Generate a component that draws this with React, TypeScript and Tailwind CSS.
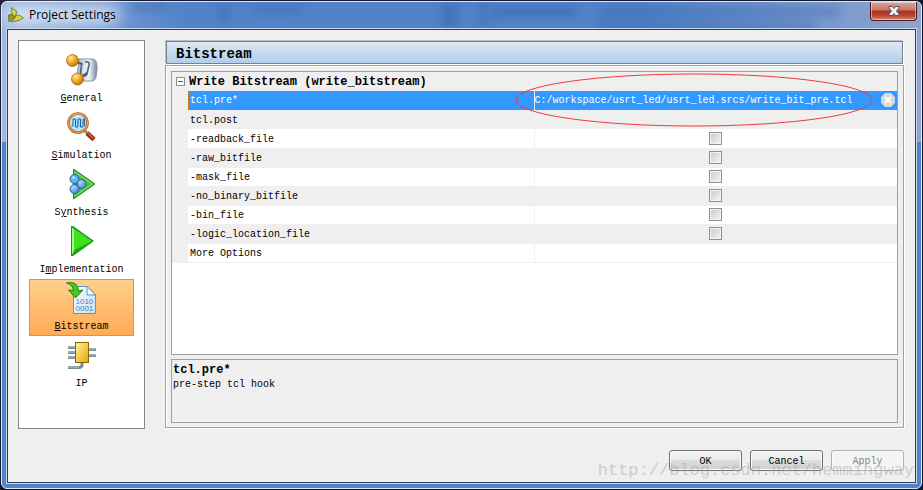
import { useState } from 'react';
import type { ReactNode } from 'react';

function LogoIcon() {
  return (
    <svg width="16" height="16" viewBox="0 0 16 16" aria-hidden="true">
      <path d="M3.500 0.500L9 4.500 7 10 4 7z" fill="#c3c92c" stroke="#6b741a" strokeWidth="0.8" />
      <path d="M0.500 8L4 7.500 6.500 10.500 1 15z" fill="#98a01e" stroke="#5f6716" strokeWidth="0.8" />
      <path d="M8 8.500l3-0.500 4.500 3-4.500 2.500L3 15l4-4z" fill="#d3d63e" stroke="#6b741a" strokeWidth="0.8" />
      <path d="M5 3l1.500 5" fill="none" stroke="#eef08a" />
    </svg>
  );
}

function GeneralIcon() {
  return (
    <svg width="32" height="32" viewBox="0 0 32 32" aria-hidden="true">
      <defs>
        <radialGradient id="gold" cx="0.35" cy="0.3" r="0.8">
          <stop offset="0" stopColor="#ffe9a0" />
          <stop offset="0.45" stopColor="#f5ae26" />
          <stop offset="1" stopColor="#b36a06" />
        </radialGradient>
        <linearGradient id="steel" x1="0" y1="0" x2="1" y2="0">
          <stop offset="0" stopColor="#a9b8c8" />
          <stop offset="0.6" stopColor="#f3f7fb" />
          <stop offset="1" stopColor="#71859b" />
        </linearGradient>
      </defs>
      <path d="M13 5h14q4.500 1 4 10l-1 8q-1 4-4 4H13l-2-4z" fill="url(#steel)" stroke="#8393a5" />
      <path d="M16 9q-2 7-1 14M19 8q5-1 4 3l-2 9q-1 3-4 2" fill="none" stroke="#50647c" strokeWidth="1.600" />
      <path d="M19.500 10l-2 10" stroke="#dfe8f1" strokeWidth="3" />
      <path d="M10 8l6 2M14 23l7-4" stroke="#4e5d70" strokeWidth="2" />
      <circle cx="6.500" cy="6.500" r="6" fill="url(#gold)" stroke="#9b6110" strokeWidth="0.7" />
      <circle cx="11.500" cy="25" r="6" fill="url(#gold)" stroke="#9b6110" strokeWidth="0.7" />
    </svg>
  );
}

function SimulationIcon() {
  return (
    <svg width="32" height="32" viewBox="0 0 32 32" aria-hidden="true">
      <defs>
        <radialGradient id="lens" cx="0.5" cy="0.5" r="0.6">
          <stop offset="0" stopColor="#8fd8ff" />
          <stop offset="1" stopColor="#d8f1ff" />
        </radialGradient>
      </defs>
      <path d="M18 19l4 4" stroke="#8f8f8f" strokeWidth="3" />
      <path d="M21 22l7 6.500" stroke="#8e2c0c" strokeWidth="4.500" />
      <path d="M21.500 21.500l6 6" stroke="#d8673a" strokeWidth="1.600" />
      <circle cx="12" cy="12" r="9.500" fill="url(#lens)" stroke="#9a6222" strokeWidth="2.600" />
      <circle cx="12" cy="12" r="9.500" fill="none" stroke="#ee9c3e" strokeWidth="1.400" />
      <path d="M5.500 15H7V8h2.500v8H12V8h2.500v8H17V8h1.500v7" fill="none" stroke="#1f5fa6" />
    </svg>
  );
}

function SynthesisIcon() {
  return (
    <svg width="32" height="32" viewBox="0 0 32 32" aria-hidden="true">
      <defs>
        <radialGradient id="bead" cx="0.35" cy="0.3" r="0.8">
          <stop offset="0" stopColor="#b5d6fa" />
          <stop offset="1" stopColor="#3a80d6" />
        </radialGradient>
      </defs>
      <path d="M7.500 1L29 16 7.500 31z" fill="#43c738" stroke="#23882a" />
      <path d="M9 4l17 12L9 28" fill="none" stroke="#8fe07c" />
      <circle cx="8.500" cy="11" r="4.500" fill="#5ab8fa" stroke="#2c5f9e" />
      <circle cx="15.500" cy="16" r="4.500" fill="url(#bead)" stroke="#2c5f9e" />
      <circle cx="8.500" cy="21" r="4.500" fill="url(#bead)" stroke="#2c5f9e" />
      <circle cx="7.500" cy="9.500" r="1.300" fill="#cdeaff" />
    </svg>
  );
}

function ImplementationIcon() {
  return (
    <svg width="32" height="32" viewBox="0 0 32 32" aria-hidden="true">
      <path d="M5 1h2l21 15L7 31H5z" fill="#149a12" />
      <path d="M7 3l19 13L8 27z" fill="#3fe01c" />
      <path d="M6 2v28l2-4V5z" fill="#a4f78c" />
      <path d="M7 29l19-13-18 9z" fill="#1fae14" />
    </svg>
  );
}

function BitstreamIcon() {
  return (
    <svg width="32" height="32" viewBox="0 0 32 32" aria-hidden="true">
      <defs>
        <linearGradient id="sheet" x1="0" y1="0" x2="1" y2="1">
          <stop offset="0" stopColor="#ffffff" />
          <stop offset="1" stopColor="#c3e1f8" />
        </linearGradient>
      </defs>
      <path d="M7.500 4.500H21l8.500 8.500v18.500h-22z" fill="url(#sheet)" stroke="#5f93c6" />
      <path d="M21 4.500V13h8.500z" fill="#f4faff" stroke="#5f93c6" />
      <text x="9.500" y="22" fontSize="8" fill="#4a7fc0" fontFamily="Liberation Sans, sans-serif">1010</text>
      <text x="9.500" y="29" fontSize="8" fill="#4a7fc0" fontFamily="Liberation Sans, sans-serif">0001</text>
      <path d="M0.500 1Q12-1.500 12.500 9l4.500-1-7.500 8-7-8 5 0.500Q7 3 0.500 1z" fill="#3fce1b" stroke="#1b8212" />
    </svg>
  );
}

function IpIcon() {
  return (
    <svg width="32" height="32" viewBox="0 0 32 32" aria-hidden="true">
      <defs>
        <linearGradient id="chip" x1="0" y1="0" x2="1" y2="1">
          <stop offset="0" stopColor="#fff3a0" />
          <stop offset="1" stopColor="#e2a800" />
        </linearGradient>
      </defs>
      <path d="M2 8.500h7M2 13.500h7M2 18.500h7M22 10.500h8M22 16.500h8M16 23v3q0 2.500-3 2.500H2" fill="none" stroke="#7d8a9a" strokeWidth="3" />
      <path d="M2 8h7M2 13h7M2 18h7M22 10h8M22 16h8M2 28h11" fill="none" stroke="#b9c4d1" />
      <rect x="9.500" y="3.500" width="13" height="20" fill="url(#chip)" stroke="#8a6508" />
    </svg>
  );
}

interface Section {
  id: string;
  label: ReactNode;
  icon: ReactNode;
}

const sections: Section[] = [
  { id: 'general', label: <><u>G</u>eneral</>, icon: <GeneralIcon /> },
  { id: 'simulation', label: <><u>S</u>imulation</>, icon: <SimulationIcon /> },
  { id: 'synthesis', label: <>S<u>y</u>nthesis</>, icon: <SynthesisIcon /> },
  { id: 'implementation', label: <>I<u>m</u>plementation</>, icon: <ImplementationIcon /> },
  { id: 'bitstream', label: <><u>B</u>itstream</>, icon: <BitstreamIcon /> },
  { id: 'ip', label: <>IP</>, icon: <IpIcon /> },
];

const flags = ['-readback_file', '-raw_bitfile', '-mask_file', '-no_binary_bitfile', '-bin_file', '-logic_location_file'];

function TitleBar() {
  return (
    <header className="relative flex h-[26px] items-start justify-between pl-[6px]">
      {/* Window contents showing through the glass */}
      <div className="absolute inset-0 overflow-hidden" aria-hidden="true">
        <div className="absolute top-0 left-[130px] h-2 w-[35px] bg-[#2f5eaa]/40 blur-xs" />
        <div className="absolute top-1 left-[216px] h-4 w-3 bg-[#2f5eaa]/30 blur-xs" />
        <div className="absolute top-1 left-[250px] h-2 w-[50px] bg-[#2f5eaa]/30 blur-xs" />
        <div className="absolute top-0 left-[440px] h-full w-4 bg-[#2f5eaa]/40 blur-xs" />
        <div className="absolute top-0 left-[477px] h-full w-2 bg-[#2f5eaa]/40 blur-xs" />
        <div className="absolute top-[6px] left-[490px] h-2 w-[85px] bg-[#2f5eaa]/50 blur-xs" />
        <div className="absolute top-[6px] left-[598px] h-2 w-[240px] bg-[#2f5eaa]/40 blur-xs" />
        <div className="absolute top-5 left-[594px] h-2 w-[220px] bg-[#2f5eaa]/40 blur-xs" />
      </div>
      <div className="relative flex h-full items-center gap-[5px]">
        <div className="absolute -inset-x-1 inset-y-1 rounded-full bg-white/70 blur-sm" />
        <div className="relative">
          <LogoIcon />
        </div>
        <h1 className="relative font-['Open_Sans',sans-serif] text-[12px] leading-4 text-black">Project Settings</h1>
      </div>
      <button
        aria-label="Close"
        className="relative mr-[4px] flex h-[19px] w-[47px] items-center justify-center rounded-b-[4px] border border-t-0 border-[#4a1c22] bg-[linear-gradient(#d8a59c,#c4766b_45%,#b02f1c_50%,#b5432f_75%,#dc8a70)] shadow-[inset_0_0_0_1px_rgba(255,255,255,0.45)]"
      >
        <svg width="12" height="10" viewBox="0 0 12 10" aria-hidden="true">
          <path d="M1 .5h3.500L6 2.500 7.500.5H11v1.500L8.500 5 11 8v1.500H7.500L6 7.500 4.500 9.500H1V8l2.500-3L1 2z" fill="#f4f4f4" stroke="#4f5468" />
        </svg>
      </button>
    </header>
  );
}

function Sidebar({ active, onSelect }: { active: string; onSelect: (id: string) => void }) {
  return (
    <nav className="w-[127px] shrink-0 self-stretch border border-[#84868f] bg-white p-[10px]">
      {sections.map((section) => (
        <button
          key={section.id}
          onClick={() => onSelect(section.id)}
          className={`flex h-[57px] w-full flex-col items-center gap-[5px] border pt-[2px] ${
            section.id === active ? 'border-[#a0a0a0] bg-linear-to-b from-[#ffcf8b] to-[#ffab54]' : 'border-transparent'
          }`}
        >
          {section.icon}
          <span className="leading-4">{section.label}</span>
        </button>
      ))}
    </nav>
  );
}

function OptionsTable() {
  const [expanded, setExpanded] = useState(true);
  const [checked, setChecked] = useState<string[]>([]);

  const toggle = (name: string) =>
    setChecked(checked.includes(name) ? checked.filter((c) => c !== name) : [...checked, name]);

  return (
    <table className="w-full table-fixed border-collapse">
      <colgroup>
        <col className="w-4" />
        <col className="w-[346px]" />
        <col />
      </colgroup>
      <tbody>
        <tr className="h-[19px] bg-[#efefef]">
          <td className="p-0">
            <button
              aria-label="Toggle group"
              onClick={() => setExpanded(!expanded)}
              className="ml-1 flex size-[9px] items-center justify-center border border-[#8c8c94] bg-white"
            >
              <span className="h-px w-[5px] bg-[#3c5aa8]" />
            </button>
          </td>
          <th colSpan={2} className="p-0 pl-px text-left text-[12px] leading-[18px] font-bold">
            Write Bitstream (write_bitstream)
          </th>
        </tr>
        {expanded && (
          <>
            <tr className="h-[19px] border-b border-[#efefef] bg-[#3399ff] text-white">
              <td className="bg-[#efefef] p-0" />
              <td className="border-r border-[#efefef] p-0">
                <div className="h-[18px] border border-dotted border-[#d0700c] pl-px leading-[18px]">tcl.pre*</div>
              </td>
              <td className="relative p-0">
                <div className="flex items-center pr-[2px]">
                  <input
                    aria-label="tcl.pre*"
                    defaultValue="C:/workspace/usrt_led/usrt_led.srcs/write_bit_pre.tcl"
                    className="h-[18px] min-w-0 flex-1 bg-transparent pt-px outline-none"
                  />
                  <button aria-label="Clear" className="rounded-full">
                    <svg width="14" height="14" viewBox="0 0 14 14" aria-hidden="true">
                      <path d="M4 0h6l4 4v6l-4 4H4l-4-4V4z" fill="#d9d9d9" />
                      <path d="M4 4l6 6M10 4l-6 6" stroke="#fff" strokeWidth="2" />
                    </svg>
                  </button>
                </div>
                <svg className="pointer-events-none absolute -top-[18px] -left-5 z-10" width="358" height="54" viewBox="0 0 358 54" aria-hidden="true">
                  <ellipse cx="179" cy="27" rx="178" ry="26" fill="none" stroke="#f23b3b" />
                </svg>
              </td>
            </tr>
            <tr className="h-[19px] bg-[#efefef]">
              <td className="p-0" />
              <td className="p-0 pt-[2px] pl-[2px]">tcl.post</td>
              <td className="p-0" />
            </tr>
            {flags.map((name) => (
              <tr key={name} className="h-[19px] border-b border-[#efefef] odd:bg-[#efefef] even:bg-white">
                <td className="bg-[#efefef] p-0" />
                <td className="border-r border-[#efefef] p-0 pt-[2px] pl-[2px]">
                  <label htmlFor={name}>{name}</label>
                </td>
                <td className="p-0">
                  <input
                    id={name}
                    type="checkbox"
                    checked={checked.includes(name)}
                    onChange={() => toggle(name)}
                    className="mx-auto block size-[13px] appearance-none border border-[#8e8f8f] bg-linear-to-br from-[#c5c9d0] to-[#f6f6f6] shadow-[inset_0_0_0_1px_#f4f4f4] checked:to-[#3c5aa8]"
                  />
                </td>
              </tr>
            ))}
            <tr className="h-[19px] border-b border-[#efefef] bg-white">
              <td className="bg-[#efefef] p-0" />
              <td className="border-r border-[#efefef] p-0 pt-[2px] pl-[2px]">More Options</td>
              <td className="p-0" />
            </tr>
          </>
        )}
      </tbody>
    </table>
  );
}

function DialogButton({ children, disabled }: { children: ReactNode; disabled?: boolean }) {
  return (
    <button
      disabled={disabled}
      className="h-[21px] w-[73px] rounded-[3px] border border-[#707070] bg-[linear-gradient(#f2f2f2,#ebebeb_48%,#dddddd_50%,#cfcfcf)] pt-[2px] shadow-[inset_0_0_0_1px_#fafafa] disabled:border-[#adb2b5] disabled:bg-none disabled:bg-[#f4f4f4] disabled:text-[#838383]"
    >
      {children}
    </button>
  );
}

export default function App() {
  const [active, setActive] = useState('bitstream');

  return (
    <div className="flex min-h-screen bg-[#15152a] font-['Liberation_Mono',monospace] text-[10px] text-black">
      <div className="m-px flex flex-1 flex-col rounded-[6px] border border-[#dce9f8] bg-[linear-gradient(90deg,#9db7e0,#5282c8_20%,#5282c8_70%,#8fa5cf)] bg-[#5282c8] bg-[length:100%_140px] bg-no-repeat">
        <TitleBar />
        <main className="relative mx-[4px] mb-[4px] flex flex-1 flex-col border border-[#c3daf0] bg-[#efefef]">
          <div className="flex flex-1 flex-col gap-[21px] border border-[#2b3d5c] px-[10px] pt-[10px] pr-[11px] pb-[11px]">
            <div className="flex flex-1 gap-5">
              <Sidebar active={active} onSelect={setActive} />
              <section className="mb-px flex min-w-0 flex-1 flex-col">
                <h2 className="m-px h-[23px] border border-[#7c8087] bg-linear-to-b from-[#dce9f5] to-[#b3cde8] pl-[9px] font-['Liberation_Mono',monospace] text-[14px] leading-6 font-bold shadow-[-1px_-1px_0_#bdbdbd,1px_1px_0_#fff]">
                  Bitstream
                </h2>
                <div className="flex flex-1 flex-col gap-1 border border-[#a0a0a0] p-[5px] pb-1 shadow-[inset_1px_1px_0_#fff,1px_1px_0_#fff]">
                  <div className="flex-1 border border-[#a0a0a0] bg-white">
                    <OptionsTable />
                  </div>
                  <div className="h-16 border border-[#a0a0a0] px-px pt-[2px]">
                    <p className="text-[12px] leading-4 font-bold">tcl.pre*</p>
                    <p className="leading-[14px]">pre-step tcl hook</p>
                  </div>
                </div>
              </section>
            </div>
            <footer className="flex justify-end gap-2">
              <DialogButton>OK</DialogButton>
              <DialogButton>Cancel</DialogButton>
              <DialogButton disabled>Apply</DialogButton>
            </footer>
          </div>
          <span className="pointer-events-none absolute right-[2px] bottom-0 text-[17px] leading-6 text-[#a8a8a0]/50">
            http://blog.csdn.net/hemmingway
          </span>
        </main>
      </div>
    </div>
  );
}
